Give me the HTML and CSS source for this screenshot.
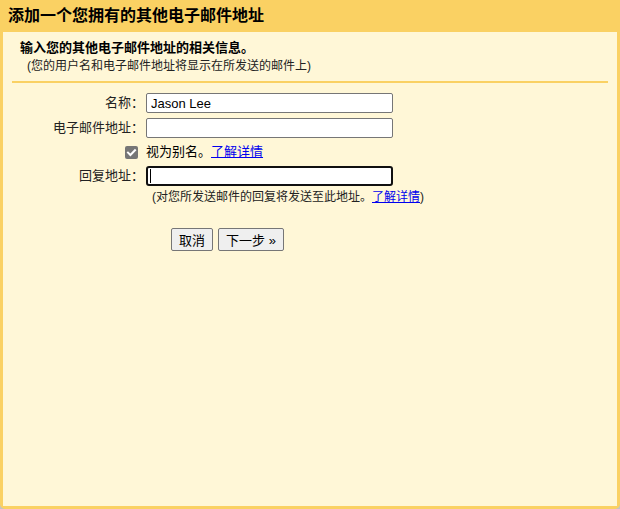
FILE: index.html
```html
<!DOCTYPE html>
<html lang="zh-CN">
<head>
<meta charset="utf-8">
<title>添加一个您拥有的其他电子邮件地址</title>
<link rel="stylesheet" href="styles.css">
</head>
<body>
<div class="dialog">
  <div class="header">添加一个您拥有的其他电子邮件地址</div>
  <div class="content">
    <div class="intro">
      <div class="lead">输入您的其他电子邮件地址的相关信息。</div>
      <div class="sub">(您的用户名和电子邮件地址将显示在所发送的邮件上)</div>
    </div>
    <div class="rule"></div>
    <div class="form">
      <label class="label" for="name">名称：</label>
      <input class="field" id="name" type="text" value="Jason Lee">

      <label class="label" for="email">电子邮件地址：</label>
      <input class="field" id="email" type="text" value="">

      <div class="label check-cell">
        <span class="checkbox">
          <svg width="13" height="13" viewBox="0 0 13 13"><path d="M3 6.6 L5.4 9 L10 4.2" fill="none" stroke="#fff" stroke-width="2" stroke-linecap="square"/></svg>
        </span>
      </div>
      <div class="check-text">视为别名。<a href="#">了解详情</a></div>

      <label class="label" for="reply">回复地址：</label>
      <span class="focus-wrap">
        <input class="field focused" id="reply" type="text" value="">
        <span class="caret"></span>
      </span>

      <div></div>
      <div class="hint">(对您所发送邮件的回复将发送至此地址。<a href="#">了解详情</a>)</div>

      <div></div>
      <div class="buttons">
        <button class="btn" type="button">取消</button>
        <button class="btn" type="button">下一步 »</button>
      </div>
    </div>
  </div>
</div>
</body>
</html>
```
FILE: styles.css
```css
html {
  background: #c4c4c4;
}
body {
  margin: 0;
  font-family: "Liberation Sans", "Noto Sans CJK SC", sans-serif;
  color: #000;
}
.dialog {
  height: 509px;
  box-sizing: border-box;
  display: flex;
  flex-direction: column;
  background: #fad163;
  border-radius: 0 0 5px 5px;
  padding: 0 3px 3px 3px;
}
.header {
  height: 32px;
  line-height: 32px;
  font-size: 16px;
  font-weight: bold;
  padding-left: 5px;
  flex: none;
}
.content {
  flex: 1;
  background: #fff7d7;
}
.intro {
  padding: 7px 0 0 17px;
}
.lead {
  font-size: 13px;
  font-weight: bold;
  line-height: 18px;
}
.sub {
  font-size: 12px;
  line-height: 18px;
  padding-left: 7px;
  color: #222;
}
.rule {
  height: 2px;
  background: #fad163;
  margin: 6px 9px 0 9px;
}
.form {
  display: grid;
  grid-template-columns: 141px 246px;
  column-gap: 2px;
  row-gap: 5px;
  margin-top: 10px;
  font-size: 13px;
  align-items: center;
}
.label {
  text-align: right;
  line-height: 18px;
  color: #222;
}
.field {
  box-sizing: border-box;
  width: 247px;
  height: 20px;
  margin: 0;
  border: 1px solid #767676;
  border-radius: 2px;
  background: #fff;
  padding: 0 4px;
  font-family: "Liberation Sans", "Noto Sans CJK SC", sans-serif;
  font-size: 13px;
  color: #000;
  outline: none;
}
.focus-wrap {
  position: relative;
  display: block;
  height: 20px;
}
.field.focused {
  border: 2px solid #101010;
  border-radius: 3px;
}
.caret {
  position: absolute;
  left: 4px;
  top: 3px;
  width: 1px;
  height: 14px;
  background: #000;
}
.check-cell {
  display: flex;
  justify-content: flex-end;
  padding-right: 6px;
  height: 18px;
  align-items: center;
}
.checkbox {
  display: block;
  width: 13px;
  height: 13px;
  border-radius: 2px;
  background: #767676;
}
.checkbox svg {
  display: block;
}
.check-text {
  line-height: 18px;
}
a {
  color: #0000ee;
  text-decoration: underline;
}
.hint {
  font-size: 12px;
  line-height: 16px;
  padding-left: 6px;
  color: #222;
  white-space: nowrap;
  margin-top: -2px;
}
.buttons {
  display: flex;
  gap: 5px;
  padding-left: 25px;
  margin-top: 18px;
}
.btn {
  box-sizing: border-box;
  height: 23px;
  margin: 0;
  padding: 0 7px;
  border: 1px solid #767676;
  border-radius: 2px;
  background: #efefef;
  font-family: "Liberation Sans", "Noto Sans CJK SC", sans-serif;
  font-size: 13px;
  color: #000;
}
```
